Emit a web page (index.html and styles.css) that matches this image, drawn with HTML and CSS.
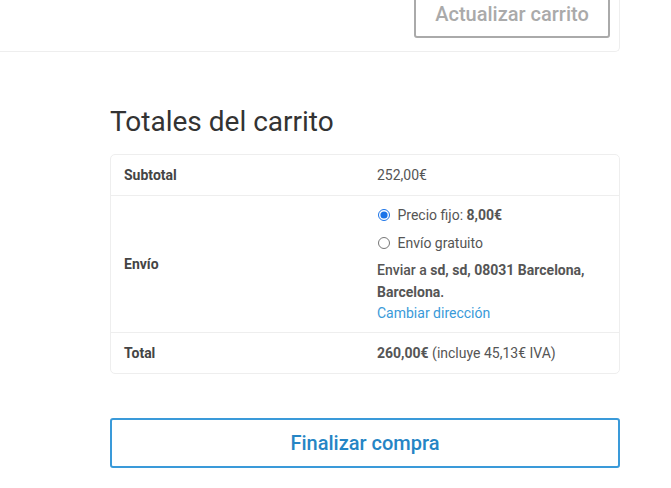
FILE: index.html
```html
<!DOCTYPE html>
<html lang="es">
<head>
  <meta charset="UTF-8" />
  <title>Carrito</title>
  <link rel="stylesheet" href="styles.css">
</head>
<body>
  <div class="cart-actions">
    <button class="btn-update" disabled>Actualizar carrito</button>
  </div>

  <div class="cart-totals">
    <h2>Totales del carrito</h2>

    <table class="totals-table">
      <tr>
        <th>Subtotal</th>
        <td>252,00€</td>
      </tr>
      <tr class="shipping">
        <th>Envío</th>
        <td>
          <ul class="shipping-methods">
            <li><label><input type="radio" name="envio" checked /> Precio fijo: <strong>8,00€</strong></label></li>
            <li><label><input type="radio" name="envio" /> Envío gratuito</label></li>
          </ul>
          <p class="destination">Enviar a <strong>sd, sd, 08031 Barcelona,</strong><br><strong>Barcelona</strong>.</p>
          <a href="#" class="change-address">Cambiar dirección</a>
        </td>
      </tr>
      <tr>
        <th>Total</th>
        <td><strong>260,00€</strong> (incluye 45,13€ IVA)</td>
      </tr>
    </table>

    <button class="btn-checkout">Finalizar compra</button>
  </div>
</body>
</html>
```

FILE: styles.css
```css
body {
  margin: 0;
  background-color: #fff;
  font-family: Roboto, 'Liberation Sans', sans-serif;
  color: #555;
}

.cart-actions {
  width: 620px;
  height: 52px;
  box-sizing: border-box;
  border-right: 1px solid #eee;
  border-bottom: 1px solid #eee;
  border-bottom-right-radius: 5px;
  display: flex;
  justify-content: flex-end;
  align-items: flex-end;
  padding: 0 9px 13px 0;
  overflow: hidden;
}

.btn-update {
  background: #fff;
  border: 2px solid #aaa;
  border-radius: 3px;
  color: #aaa;
  font-family: inherit;
  font-size: 20px;
  font-weight: 500;
  height: 52px;
  padding: 0 10px;
  padding-top: 4px;
  box-sizing: border-box;
  width: 196px;
}

.cart-totals {
  width: 510px;
  margin-left: 110px;
  padding-top: 52px;
}

.cart-totals h2 {
  font-size: 28px;
  font-weight: 400;
  color: #333;
  margin: 0 0 14px 0;
  line-height: 36px;
}

.totals-table {
  width: 100%;
  border: 1px solid #eee;
  border-radius: 5px;
  border-spacing: 0;
  font-size: 14px;
}

.totals-table th,
.totals-table td {
  text-align: left;
  padding: 11px 12px 11px 13px;
  border-top: 1px solid #eee;
  line-height: 18px;
  vertical-align: middle;
}

.totals-table tr:first-child th,
.totals-table tr:first-child td {
  border-top: none;
}

.totals-table th {
  width: 50%;
  color: #444;
  font-weight: 700;
}

.totals-table td {
  color: #555;
  padding-left: 12px;
}

.totals-table td strong {
  font-weight: 700;
}

.shipping td {
  padding-top: 10px;
  padding-bottom: 9px;
}

.shipping-methods {
  list-style: none;
  margin: 0;
  padding: 0;
}

.shipping-methods li {
  height: 28px;
  line-height: 18px;
}

.shipping-methods li:last-child {
  height: 25px;
}

.shipping-methods input {
  margin: 0 4px 0 1px;
  width: 12px;
  height: 12px;
  vertical-align: -1px;
  accent-color: #1a73e8;
}

.destination {
  margin: 0;
  line-height: 22px;
  font-weight: 500;
}

.change-address {
  color: #3a9ad9;
  text-decoration: none;
  line-height: 20px;
}

.btn-checkout {
  display: block;
  width: 100%;
  margin-top: 44px;
  height: 50px;
  background: #fff;
  border: 2px solid #3a9ad9;
  border-radius: 3px;
  color: #2585c5;
  font-family: inherit;
  font-size: 20px;
  font-weight: 500;
  cursor: pointer;
}
```
